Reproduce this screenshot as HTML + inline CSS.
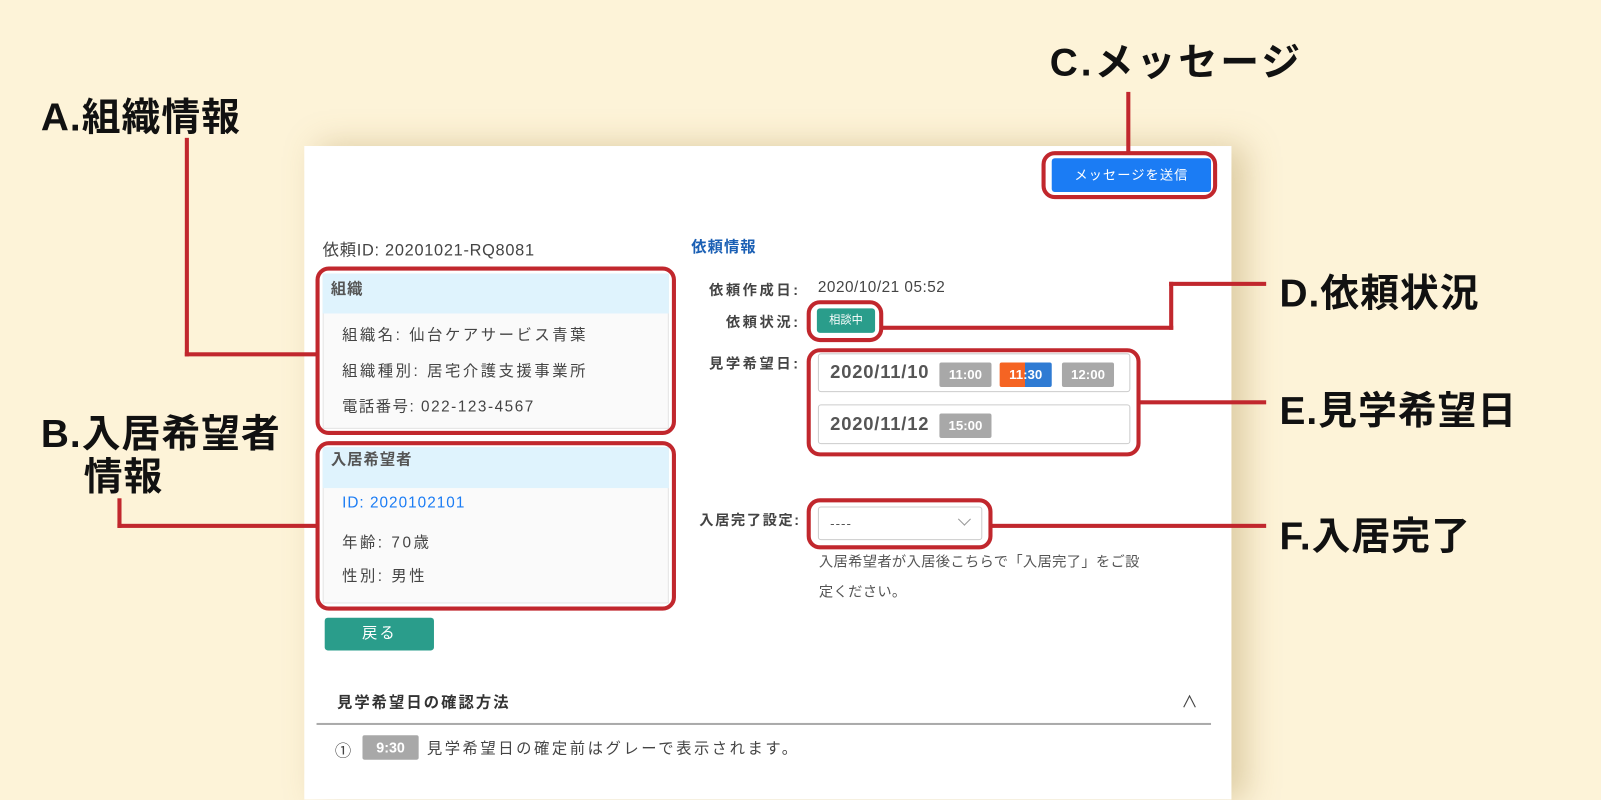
<!DOCTYPE html>
<html><head><meta charset="utf-8"><style>
*{margin:0;padding:0;box-sizing:border-box}
body{width:1601px;height:761px;background:#fdf3d8;position:relative;overflow:hidden;font-family:"Liberation Sans","Noto Sans CJK JP",sans-serif;color:#444}
#w{position:absolute;left:0;top:0;width:1568px;height:746px;transform:scale(1.0211);transform-origin:0 0}
.a{position:absolute}
.panel{left:298px;top:143px;width:908px;height:640px;background:#fff;box-shadow:14px 0 30px rgba(160,130,60,.35)}
.big{font-weight:bold;font-size:38px;color:#111;letter-spacing:1px}
.red{border:4px solid #c1272d;border-radius:13px}
.ln{background:#c1272d}
.card{background:#fafafa;border:1px solid #e4e4e4}
.hd{background:#dff3fd;font-weight:bold;font-size:15px;color:#555;padding-left:8px;letter-spacing:1px}
.t{font-size:15px;color:#444;letter-spacing:2.5px}
.lab{font-size:14px;font-weight:bold;color:#444;text-align:right;width:120px;letter-spacing:2.5px}
.chip{background:#a8a8a8;color:#fff;font-size:13px;font-weight:bold;text-align:center;line-height:24px;height:24px;width:51px;border-radius:2px}
.dbox{border:1px solid #ccc;border-radius:3px;background:#fff}
.date{font-size:18px;font-weight:bold;color:#555;letter-spacing:0.8px}
</style></head><body><div id="w">
<div class="a panel"></div>

<div class="a big" style="left:1028px;top:30px;letter-spacing:3px">C.メッセージ</div>
<div class="a big" style="left:40px;top:84px">A.組織情報</div>
<div class="a big" style="left:40px;top:394px">B.入居希望者</div>
<div class="a big" style="left:82px;top:436px">情報</div>
<div class="a big" style="left:1253px;top:256px">D.依頼状況</div>
<div class="a big" style="left:1253px;top:371px">E.見学希望日</div>
<div class="a big" style="left:1253px;top:494px">F.入居完了</div>

<!-- lines -->
<div class="a ln" style="left:1103px;top:90px;width:4px;height:60px"></div>
<div class="a ln" style="left:181px;top:135px;width:4px;height:214px"></div>
<div class="a ln" style="left:181px;top:345px;width:130px;height:4px"></div>
<div class="a ln" style="left:115px;top:488px;width:4px;height:29px"></div>
<div class="a ln" style="left:115px;top:513px;width:196px;height:4px"></div>
<div class="a ln" style="left:863px;top:319px;width:286px;height:4px"></div>
<div class="a ln" style="left:1145px;top:276px;width:4px;height:47px"></div>
<div class="a ln" style="left:1145px;top:276px;width:95px;height:4px"></div>
<div class="a ln" style="left:1115px;top:392px;width:125px;height:4px"></div>
<div class="a ln" style="left:970px;top:513px;width:270px;height:4px"></div>

<!-- message button -->
<div class="a" style="left:1030px;top:155px;width:156px;height:33px;background:#1b7cf4;border-radius:3px;color:#fff;font-size:13px;text-align:center;line-height:33px;letter-spacing:1px">メッセージを送信</div>
<div class="a red" style="left:1020px;top:148px;width:172px;height:47px"></div>

<div class="a t" style="left:316px;top:231px;font-size:16px;letter-spacing:0.7px">依頼ID: 20201021-RQ8081</div>

<!-- org card -->
<div class="a card" style="left:316px;top:268px;width:339px;height:152px"></div>
<div class="a hd" style="left:316px;top:268px;width:339px;height:39px;line-height:32px">組織</div>
<div class="a t" style="left:335px;top:317px">組織名: 仙台ケアサービス青葉</div>
<div class="a t" style="left:335px;top:352px">組織種別: 居宅介護支援事業所</div>
<div class="a t" style="left:335px;top:387px;letter-spacing:1.5px">電話番号: 022-123-4567</div>
<div class="a red" style="left:309px;top:261px;width:353px;height:165px"></div>

<!-- resident card -->
<div class="a card" style="left:316px;top:438px;width:339px;height:153px"></div>
<div class="a hd" style="left:316px;top:438px;width:339px;height:40px;line-height:26px">入居希望者</div>
<div class="a t" style="left:335px;top:484px;color:#1b7cf4;letter-spacing:1px">ID: 2020102101</div>
<div class="a t" style="left:335px;top:520px">年齢: 70歳</div>
<div class="a t" style="left:335px;top:553px">性別: 男性</div>
<div class="a red" style="left:309px;top:432px;width:353px;height:166px"></div>

<div class="a" style="left:318px;top:605px;width:107px;height:32px;background:#2a9d8b;border-radius:3px;color:#fff;font-size:15px;text-align:center;line-height:32px;letter-spacing:2px">戻る</div>

<!-- accordion -->
<div class="a" style="left:330px;top:677px;font-size:15px;font-weight:bold;color:#333;letter-spacing:2px">見学希望日の確認方法</div>
<div class="a" style="left:1157px;top:674px;font-size:16px;color:#444">&#8743;</div>
<div class="a" style="left:310px;top:708px;width:876px;height:2px;background:#aaa"></div>
<div class="a t" style="left:328px;top:722px;font-size:16px">①</div>
<div class="a chip" style="left:355px;top:720px;width:55px;font-size:14px">9:30</div>
<div class="a t" style="left:418px;top:722px">見学希望日の確定前はグレーで表示されます。</div>

<!-- right -->
<div class="a" style="left:677px;top:231px;font-size:15px;font-weight:bold;color:#1a5fb4;letter-spacing:1px">依頼情報</div>
<div class="a lab" style="left:664px;top:274px">依頼作成日:</div>
<div class="a t" style="left:801px;top:273px;letter-spacing:0.5px">2020/10/21 05:52</div>
<div class="a lab" style="left:664px;top:305px">依頼状況:</div>
<div class="a" style="left:800px;top:302px;width:57px;height:24px;background:#2a9d8b;border-radius:3px;color:#fff;font-size:11px;text-align:center;line-height:24px">相談中</div>
<div class="a red" style="left:790px;top:294px;width:75px;height:41px"></div>
<div class="a lab" style="left:664px;top:346px">見学希望日:</div>

<div class="a dbox" style="left:801px;top:346px;width:306px;height:38px"></div>
<div class="a date" style="left:813px;top:354px">2020/11/10</div>
<div class="a chip" style="left:920px;top:355px">11:00</div>
<div class="a chip" style="left:979px;top:355px;background:linear-gradient(90deg,#f56423 0 49%,#2f7bd3 49%)">11:30</div>
<div class="a chip" style="left:1040px;top:355px">12:00</div>
<div class="a dbox" style="left:801px;top:396px;width:306px;height:39px"></div>
<div class="a date" style="left:813px;top:405px">2020/11/12</div>
<div class="a chip" style="left:920px;top:405px">15:00</div>
<div class="a red" style="left:790px;top:341px;width:327px;height:106px"></div>

<div class="a lab" style="left:664px;top:499px;width:120px;letter-spacing:1.5px">入居完了設定:</div>
<div class="a dbox" style="left:801px;top:496px;width:161px;height:33px"></div>
<div class="a" style="left:813px;top:505px;font-size:13px;color:#555;letter-spacing:1px">----</div>
<div class="a" style="left:940px;top:504px;width:9px;height:9px;border-right:1px solid #999;border-bottom:1px solid #999;transform:rotate(45deg)"></div>
<div class="a red" style="left:790px;top:488px;width:182px;height:50px"></div>
<div class="a t" style="left:802px;top:540px;color:#555;font-size:14px;letter-spacing:0.3px">入居希望者が入居後こちらで「入居完了」をご設</div>
<div class="a t" style="left:802px;top:569px;color:#555;font-size:14px;letter-spacing:0.3px">定ください。</div>
</div></body></html>
